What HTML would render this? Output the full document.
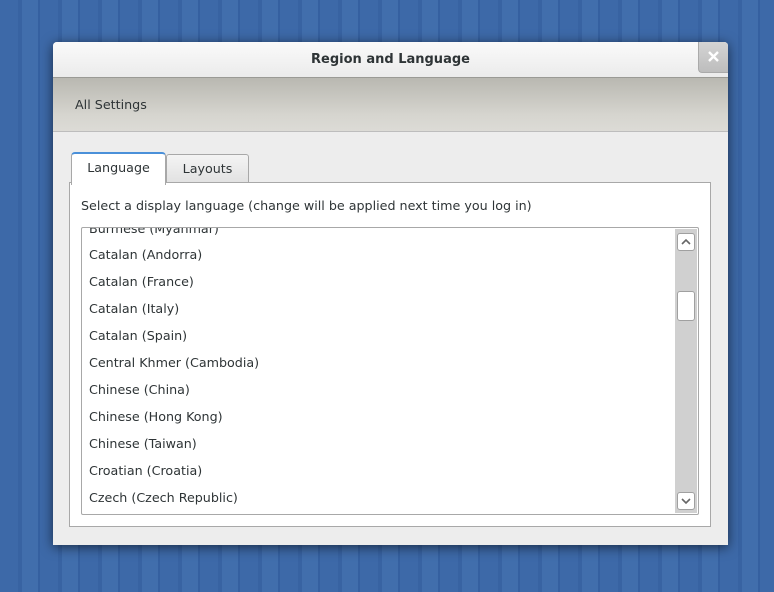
<!DOCTYPE html>
<html><head><style>
body{margin:0;width:774px;height:592px;overflow:hidden;font-family:"DejaVu Sans","Liberation Sans",sans-serif;
background:repeating-linear-gradient(90deg,#3d69a8 0,#3d69a8 18px,#3863a2 18px,#3863a2 22px,#416eac 22px,#416eac 38px,#3560a0 38px,#3560a0 40px);position:relative}
.win{position:absolute;left:53px;top:42px;width:675px;height:503px;background:#ededed;box-shadow:0 2px 12px rgba(0,0,0,.6);border-radius:4px 4px 0 0;overflow:hidden}
.title{height:35px;background:linear-gradient(#fafafa,#ebebeb);text-align:center;line-height:36px;font-size:13px;font-weight:bold;color:#2e3436}
.close{position:absolute;right:0;top:0;width:29px;height:30px;background:linear-gradient(#d4d4d4,#bdbdbd);border-left:1px solid #aaa;border-bottom:1px solid #aaa;border-radius:0 0 0 4px}
.tool{height:53px;background:linear-gradient(#b9b8b1,#d6d5cf 70%,#dcdbd6);border-top:1px solid #9a9a95;border-bottom:1px solid #bdbdbd;font-size:12.7px;color:#2e3436;line-height:54px;padding-left:22px}
.nb{position:absolute;left:16px;top:140px;width:640px;height:343px;background:#fff;border:1px solid #a8a8a8}
.tab{position:absolute;font-size:12.7px;color:#2e3436;text-align:center}
.t1{left:18px;top:110px;width:93px;height:31px;background:#fff;border:1px solid #a8a8a8;border-bottom:none;border-top:2px solid #4a90d9;border-radius:4px 4px 0 0;line-height:28px;z-index:2}
.t2{left:113px;top:112px;width:81px;height:27px;background:linear-gradient(#f4f4f4,#e2e2e2);border:1px solid #a8a8a8;border-radius:3px 3px 0 0;line-height:28px}
.lbl{position:absolute;left:28px;top:156px;font-size:12.7px;color:#2e3436}
.list{position:absolute;left:28px;top:185px;width:616px;height:286px;border:1px solid #a8a8a8;border-radius:2px;overflow:hidden;background:#fff}
.row{position:absolute;left:7px;font-size:12.7px;color:#2e3436}
.sb{position:absolute;right:1px;top:1px;width:22px;bottom:1px;background:#d0d0d0}
.btn{position:absolute;left:2px;width:16px;height:16px;background:#fff;border:1px solid #a0a0a0;border-radius:3px}
.btn svg{position:absolute;left:3px;top:4px}
.thumb{position:absolute;left:2px;top:62px;width:16px;height:28px;background:#fff;border:1px solid #a0a0a0;border-radius:3px}
</style></head><body>
<div class="win">
<div class="title">Region and Language</div>
<div class="close"><svg width="29" height="30"><path d="M10 10L19 19M19 10L10 19" stroke="#fff" stroke-width="2.4"/></svg></div>
<div class="tool">All Settings</div>
<div class="tab t1">Language</div>
<div class="tab t2">Layouts</div>
<div class="nb"></div>
<div class="lbl">Select a display language (change will be applied next time you log in)</div>
<div class="list">
<div class="row" style="top:-7px">Burmese (Myanmar)</div>
<div class="row" style="top:19px">Catalan (Andorra)</div>
<div class="row" style="top:46px">Catalan (France)</div>
<div class="row" style="top:73px">Catalan (Italy)</div>
<div class="row" style="top:100px">Catalan (Spain)</div>
<div class="row" style="top:127px">Central Khmer (Cambodia)</div>
<div class="row" style="top:154px">Chinese (China)</div>
<div class="row" style="top:181px">Chinese (Hong Kong)</div>
<div class="row" style="top:208px">Chinese (Taiwan)</div>
<div class="row" style="top:235px">Croatian (Croatia)</div>
<div class="row" style="top:262px">Czech (Czech Republic)</div>
<div class="sb"><div class="btn" style="top:4px"><svg width="10" height="8"><path d="M1 6L5 2L9 6" stroke="#666" stroke-width="1.6" fill="none"/></svg></div><div class="thumb"></div><div class="btn" style="bottom:3px"><svg width="10" height="8"><path d="M1 2L5 6L9 2" stroke="#666" stroke-width="1.6" fill="none"/></svg></div></div>
</div>
</div>
</body></html>
